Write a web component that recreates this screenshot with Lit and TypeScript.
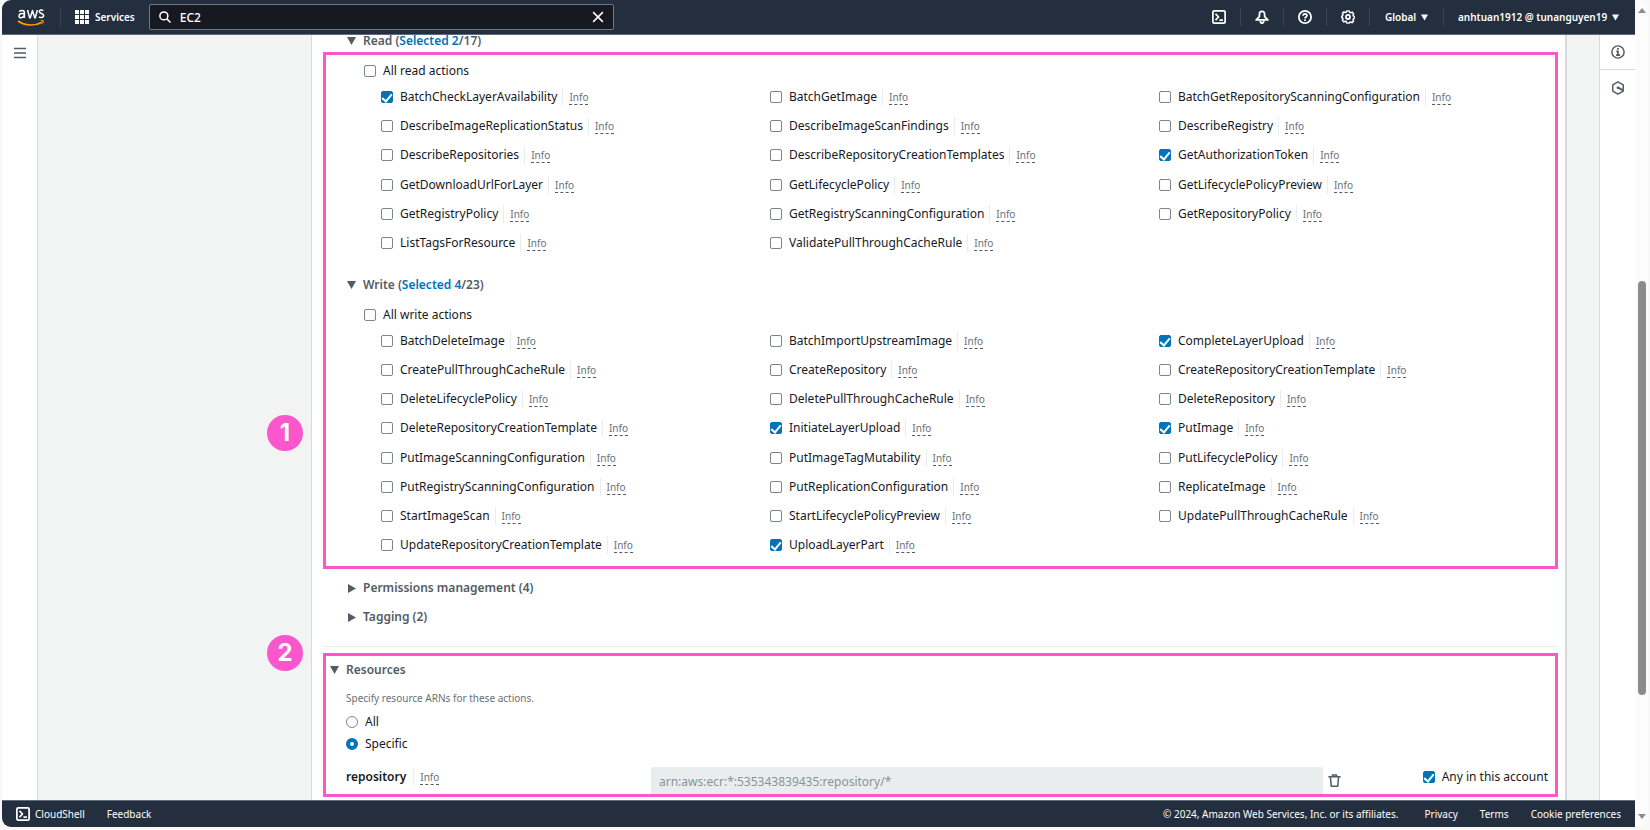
import { LitElement, html, svg, css, nothing } from "lit";
import { customElement, property } from "lit/decorators.js";

type Action = { name: string; checked?: boolean };

const a = (name: string, checked = false): Action => ({ name, checked });

const READ: Action[] = [
  a("BatchCheckLayerAvailability", true), a("BatchGetImage"), a("BatchGetRepositoryScanningConfiguration"),
  a("DescribeImageReplicationStatus"), a("DescribeImageScanFindings"), a("DescribeRegistry"),
  a("DescribeRepositories"), a("DescribeRepositoryCreationTemplates"), a("GetAuthorizationToken", true),
  a("GetDownloadUrlForLayer"), a("GetLifecyclePolicy"), a("GetLifecyclePolicyPreview"),
  a("GetRegistryPolicy"), a("GetRegistryScanningConfiguration"), a("GetRepositoryPolicy"),
  a("ListTagsForResource"), a("ValidatePullThroughCacheRule"),
];

const WRITE: Action[] = [
  a("BatchDeleteImage"), a("BatchImportUpstreamImage"), a("CompleteLayerUpload", true),
  a("CreatePullThroughCacheRule"), a("CreateRepository"), a("CreateRepositoryCreationTemplate"),
  a("DeleteLifecyclePolicy"), a("DeletePullThroughCacheRule"), a("DeleteRepository"),
  a("DeleteRepositoryCreationTemplate"), a("InitiateLayerUpload", true), a("PutImage", true),
  a("PutImageScanningConfiguration"), a("PutImageTagMutability"), a("PutLifecyclePolicy"),
  a("PutRegistryScanningConfiguration"), a("PutReplicationConfiguration"), a("ReplicateImage"),
  a("StartImageScan"), a("StartLifecyclePolicyPreview"), a("UpdatePullThroughCacheRule"),
  a("UpdateRepositoryCreationTemplate"), a("UploadLayerPart", true),
];

const icon = (size: number, body: unknown, box = 16) => html`
  <svg width=${size} height=${size} viewBox="0 0 ${box} ${box}" fill="none" stroke="currentColor"
    stroke-width="2" stroke-linejoin="round" aria-hidden="true">${body}</svg>`;

const caretDown = html`<svg class="caret" width="9" height="8" viewBox="0 0 9 8" aria-hidden="true"><path d="M0 0h9L4.5 8z" fill="currentColor"/></svg>`;
const caretRight = html`<svg class="caret" width="9" height="9" viewBox="0 0 9 9" aria-hidden="true"><path d="M1 0l8 4.5L1 9z" fill="currentColor"/></svg>`;
const shellIcon = icon(14, svg`<rect x="1" y="1" width="14" height="14" rx="1.5"/><path d="M4 4.500L7.500 8 4 11.500M8.500 11.500h4"/>`);
const bellIcon = icon(14, svg`<path d="M8 1.500c-2.200 0-3 1.700-3 3.500v2.500L1.300 11.400h13.400L11 7.500V5c0-1.800-.8-3.500-3-3.500z"/><path d="M6 12c0 4 4 4 4 0"/>`);
const helpIcon = icon(14, svg`<circle cx="8" cy="8" r="7"/><path d="M5.800 6.600c0-3 4.400-3 4.400-.2 0 1.600-2.200 1.500-2.200 3.200"/><path d="M8 10.800v1.700"/>`);
const gearIcon = icon(14, svg`<path d="M6.700 1h2.600l.5 1.600 1.300.6 1.600-.8 1.700 1.800-.7 1.600.5 1.200 1.300.5v1.800l-1.300.6-.5 1.200.7 1.600-1.700 1.800-1.600-.8-1.300.6L9.300 15H6.700l-.5-1.600-1.300-.6-1.600.8-1.700-1.800.7-1.600-.5-1.200L.9 8.800V7.200l.9-.7.5-1.200-.7-1.600 1.700-1.600 1.600.8 1.300-.6z" stroke-width="1.700"/><circle cx="8" cy="8" r="2.300"/>`);
const infoIcon = icon(14, svg`<circle cx="8" cy="8" r="7" stroke-width="1.700"/><path d="M8 3.500v2M6 7.300h2v4M5.800 11.700h4.600"/>`);
const hexIcon = icon(14, svg`<path d="M8 1l6 3.500v7L8 15l-6-3.500v-7z" stroke-width="1.700"/><path d="M8 7.500l5.500 3" stroke-width="2.200"/><circle cx="8" cy="7.800" r="1.600" fill="currentColor" stroke="none"/>`);
const trashIcon = icon(13, svg`<path d="M.5 3.500h15M3 4l1 11h8l1-11M5.500 3V1.200h5V3" stroke-width="1.900"/>`);
const searchIcon = icon(12, svg`<circle cx="6.500" cy="6.500" r="5.300"/><path d="M10.500 10.500L15.300 15.300"/>`);
const closeIcon = icon(12, svg`<path d="M1.500 1.500l13 13M14.500 1.500l-13 13"/>`);
const gridIcon = html`<svg width="14" height="14" viewBox="0 0 14 14" fill="currentColor" aria-hidden="true">
  ${[0, 5, 10].map((y) => [0, 5, 10].map((x) => svg`<rect x=${x} y=${y} width="4" height="4"/>`))}</svg>`;

const base = css`
  :host, * { box-sizing: border-box; }
  button { font: inherit; color: inherit; background: none; border: 0; padding: 0; cursor: pointer; }
  a { color: inherit; text-decoration: none; }
  svg { display: block; flex: none; }
`;

const controls = css`
  label { display: flex; align-items: center; gap: 7px; line-height: 20px; }
  input[type="checkbox"], input[type="radio"] {
    appearance: none; flex: none; margin: 0; width: 12px; height: 12px; background: #fff;
    border: 1px solid #7d868c; border-radius: 2px; display: grid; place-items: center;
  }
  input[type="radio"] { border-radius: 50%; }
  input[type="checkbox"]:checked { background: #0073bb; border-color: #0073bb; }
  input[type="checkbox"]:checked::before {
    content: ""; width: 4px; height: 8px; margin-bottom: 2px;
    border: solid #fff; border-width: 0 2px 2px 0; transform: rotate(40deg);
  }
  input[type="radio"]:checked { border: 4px solid #0073bb; }
  .info {
    margin-left: 5px; padding-left: 6px; border-left: 1px solid #eaeded;
    font-size: 10px; line-height: 18px; color: #687078;
  }
  .info a { display: inline-block; line-height: 14px; border-bottom: 1px dashed #545b64; }
`;

@customElement("action-grid")
class ActionGrid extends LitElement {
  @property({ attribute: false }) actions: Action[] = [];
  @property() kind = "";

  static styles = [base, controls, css`
    :host { display: block; }
    .all { display: flex; height: 22px; padding-left: 38px; }
    .grid { display: grid; grid-template-columns: repeat(3, 1fr); grid-auto-rows: 1fr; padding: 0 7px 0 55px; }
    .read { min-height: 176px; }
    .write { min-height: 234px; }
    .item { display: flex; align-items: center; }
  `];

  render() {
    return html`
      <label class="all"><input type="checkbox">All ${this.kind} actions</label>
      <div class="grid ${this.kind}">
        ${this.actions.map((x) => html`
          <div class="item">
            <label><input type="checkbox" .checked=${!!x.checked}>${x.name}</label>
            <span class="info"><a href="#info">Info</a></span>
          </div>`)}
      </div>`;
  }
}

@customElement("app-root")
class AppRoot extends LitElement {
  static styles = [base, controls, css`
    :host {
      display: flex; height: 100vh; padding: 0 2px 3px; background: #f8f8f8; overflow: hidden;
      font-family: "Noto Sans", "Open Sans", sans-serif; font-size: 12px; color: #16191f;
    }
    .page { flex: 1; min-width: 0; display: flex; flex-direction: column; border-radius: 9px 0 0 9px; overflow: hidden; }
    .top {
      flex: none; display: flex; align-items: center; height: 35px; background: #232f3e; color: #fff;
      font-size: 10px; font-weight: 600; padding-left: 15px; border-bottom: 1px solid #5f6b7a;
    }
    .logo { padding-right: 15px; border-right: 1px solid #3a4553; }
    .services { display: flex; align-items: center; gap: 6px; padding: 0 14px; }
    .search {
      display: flex; align-items: center; gap: 9px; width: 465px; height: 26px; padding: 0 9px;
      background: #16191f; border: 1px solid #6f7a85; border-radius: 2px;
    }
    .search input { flex: 1; min-width: 0; height: 24px; border: 0; padding: 0; background: none; color: #fff; font: inherit; font-size: 12px; font-weight: 500; outline: 0; }
    .tools { display: flex; margin-left: auto; }
    .tools > button { display: flex; align-items: center; justify-content: center; gap: 5px; height: 18px; width: 43px; border-left: 1px solid #3a4553; }
    .tools > button:first-child { border-left: 0; }
    .tools > .region { width: 74px; }
    .tools > .account { width: 192px; justify-content: flex-start; padding-left: 14px; }
    .tools .caret { width: 7px; height: 7px; }
    .body { flex: 1; min-height: 0; display: flex; background: #f2f3f3; }
    .rail { flex: none; width: 36px; background: #fff; color: #545b64; }
    .rail button { display: grid; place-items: center; width: 100%; height: 35px; }
    .left { border-right: 1px solid #d5dbdb; }
    .right { border-left: 1px solid #d5dbdb; }
    .right button:first-child { border-bottom: 1px solid #d5dbdb; }
    .main { flex: 1; min-width: 0; padding: 0 32px 0 273px; }
    .card { min-height: 100%; padding: 0 7px 0 11px; background: #fff; border: solid #d5dbdb; border-width: 0 2px 0 1px; }
    h2 { margin: 0; font-size: 12px; line-height: 20px; font-weight: 600; color: #545b64; padding-left: 24px; }
    h2 button { display: flex; align-items: center; gap: 7px; line-height: inherit; }
    h2 b { font-weight: 600; color: #0073bb; }
    .first h2 { line-height: 12px; }
    .callout { position: relative; border: 3px solid #fc56cd; }
    .callout h2 { padding-left: 21px; }
    .badge {
      position: absolute; left: -59px; width: 36px; height: 36px; border-radius: 50%; background: #fc56cd;
      color: #fff; font: 700 24px/36px Inter, sans-serif; text-align: center;
    }
    .one { top: 360px; }
    .two { top: -21px; }
    .actions { margin-top: 5px; padding: 5px 0 6px; }
    .actions h2 { margin: 17px 0 9px; }
    .more { display: grid; gap: 9px; margin: 9px 0 19px; }
    hr { margin: 0 0 6px; border: 0; border-top: 1px solid #eaeded; }
    .resources { padding: 4px 7px 0 20px; }
    .callout.resources h2 { padding-left: 0; margin-left: -16px; }
    .hint { margin: 8px 0 3px; font-size: 10px; line-height: 20px; color: #687078; }
    .choice { height: 22px; }
    .arn { display: grid; grid-template-columns: 305px 1fr 225px; margin-top: 12px; }
    .name { display: flex; align-items: center; height: 20px; font-weight: 600; }
    .name .info { font-weight: 400; margin-left: 7px; }
    .arn input[type="text"] {
      width: 100%; height: 27px; padding: 1px 8px 0; border: 0; border-radius: 2px 2px 0 0; background: #eaeded;
      color: #879596; font: inherit;
    }
    .side { display: flex; justify-content: space-between; align-items: center; padding-left: 5px; color: #545b64; }
    .side label { align-self: flex-start; color: #16191f; }
    .foot {
      position: relative; flex: none; display: flex; align-items: center; height: 27px; padding: 0 14px; gap: 22px;
      background: #232f3e; border-top: 1px solid #5f6b7a; color: #fff; font-size: 10px;
    }
    .foot button { display: flex; align-items: center; gap: 5px; }
    .copy { margin-left: auto; padding-right: 4px; }
    .bar {
      flex: none; width: 13px; display: flex; flex-direction: column; justify-content: space-between; align-items: center;
      padding: 8px 0; background: #fcfcfc; color: #8b8b8b; border-radius: 0 9px 9px 0; position: relative;
    }
    .thumb { position: absolute; top: 34%; height: 50%; width: 8px; border-radius: 4px; background: #8b8b8b; }
  `];

  private heading(title: string, rest: unknown = nothing, open = true) {
    return html`<h2><button aria-expanded=${open}>${open ? caretDown : caretRight}<span>${title}${rest}</span></button></h2>`;
  }

  render() {
    return html`
      <div class="page">
        <header class="top">
          <a class="logo" href="#home" aria-label="aws">
            <svg width="28" height="19" viewBox="0 0 28 19">
              <g fill="none" stroke="#fff" stroke-width="1.500" stroke-linejoin="round">
                <path d="M2.200 3.600C3.200 2.200 7.400 1.700 7.400 4.600V10M7.400 6C4.500 5 2 5.600 2 7.900c0 2.500 4 2.300 5.400-.5"/>
                <path d="M10.500 2l2.200 7.700h.6L15.500 2.500l2.200 7.200h.6L20.400 2"/>
                <path d="M26.300 2.600c-1.500-1-4-.8-4 1 0 2.300 4.400 1.500 4.400 3.900 0 2.300-3.100 2.500-4.800 1.400"/>
              </g>
              <path d="M1 13c7 5 17 5.200 24 1.200" fill="none" stroke="#f90" stroke-width="1.700"/>
              <path d="M22.500 12.600c1.600-.8 3.400-.7 4.300-.2.200 1.500-.5 3.300-1.900 4.500.5-1.300 1-2.600.7-3.300-.6-.7-1.900-.8-3.100-1z" fill="#f90"/>
            </svg>
          </a>
          <button class="services">${gridIcon}Services</button>
          <div class="search">
            ${searchIcon}
            <input type="text" aria-label="Search" value="EC2">
            <button aria-label="Clear search">${closeIcon}</button>
          </div>
          <nav class="tools">
            <button aria-label="CloudShell">${shellIcon}</button>
            <button aria-label="Notifications">${bellIcon}</button>
            <button aria-label="Help">${helpIcon}</button>
            <button aria-label="Settings">${gearIcon}</button>
            <button class="region">Global ${caretDown}</button>
            <button class="account">anhtuan1912 @ tunanguyen19 ${caretDown}</button>
          </nav>
        </header>

        <div class="body">
          <nav class="rail left">
            <button aria-label="Open navigation">
              <svg width="12" height="12" viewBox="0 0 12 12" fill="none" stroke="currentColor" stroke-width="1.500"><path d="M0 1.500h12M0 6h12M0 10.500h12"/></svg>
            </button>
          </nav>
          <main class="main">
            <div class="card">
              <div class="first">${this.heading("Read (", html`<b>Selected 2</b>/17)`)}</div>
              <section class="callout actions">
                <span class="badge one">1</span>
                <action-grid kind="read" .actions=${READ}></action-grid>
                ${this.heading("Write (", html`<b>Selected 4</b>/23)`)}
                <action-grid kind="write" .actions=${WRITE}></action-grid>
              </section>
              <div class="more">
                ${this.heading("Permissions management (4)", nothing, false)}
                ${this.heading("Tagging (2)", nothing, false)}
              </div>
              <hr>
              <section class="callout resources">
                <span class="badge two">2</span>
                ${this.heading("Resources")}
                <p class="hint">Specify resource ARNs for these actions.</p>
                <label class="choice"><input type="radio" name="scope">All</label>
                <label class="choice"><input type="radio" name="scope" checked>Specific</label>
                <div class="arn">
                  <div class="name"><label for="arn">repository</label><span class="info"><a href="#info">Info</a></span></div>
                  <input id="arn" type="text" disabled value="arn:aws:ecr:*:535343839435:repository/*">
                  <div class="side">
                    <button aria-label="Remove">${trashIcon}</button>
                    <label><input type="checkbox" checked>Any in this account</label>
                  </div>
                </div>
              </section>
            </div>
          </main>
          <nav class="rail right">
            <button aria-label="Info">${infoIcon}</button>
            <button aria-label="Tutorials">${hexIcon}</button>
          </nav>
        </div>

        <footer class="foot">
          <button>${shellIcon}CloudShell</button>
          <a href="#feedback">Feedback</a>
          <span class="copy">© 2024, Amazon Web Services, Inc. or its affiliates.</span>
          <a href="#privacy">Privacy</a>
          <a href="#terms">Terms</a>
          <a href="#cookies">Cookie preferences</a>
        </footer>
      </div>
      <div class="bar">
        <svg width="8" height="5" viewBox="0 0 8 5"><path d="M4 0l4 5H0z" fill="currentColor"/></svg>
        <div class="thumb"></div>
        <svg width="8" height="5" viewBox="0 0 8 5"><path d="M0 0h8L4 5z" fill="currentColor"/></svg>
      </div>`;
  }
}
